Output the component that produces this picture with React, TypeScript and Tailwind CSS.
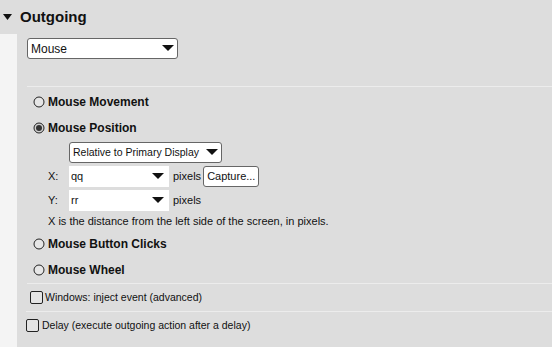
import React from 'react';

const Arrow = () => (
  <svg width="12" height="7" viewBox="0 0 12 7" className="shrink-0">
    <path d="M0 0 H12 L6 6 Z" fill="#111" />
  </svg>
);

const Radio = ({ checked }: { checked?: boolean }) => (
  <svg width="12" height="12" viewBox="0 0 12 12" className="shrink-0">
    <circle cx="6" cy="6" r="5" fill={checked ? '#cfcfcf' : '#e6e6e6'} stroke="#222" strokeWidth="1" />
    {checked && <circle cx="6" cy="6" r="3" fill="#333" />}
  </svg>
);

const Checkbox = () => (
  <div className="w-[13px] h-[13px] border border-[#222] rounded-[2px] bg-[#e4e4e4] shrink-0" />
);

const Select = ({ label, w, size }: { label: string; w: string; size: string }) => (
  <div className={`${w} ${size} h-[21px] bg-white border border-[#666] rounded-[3px] flex items-center justify-between pl-[3px] pr-[3px] whitespace-nowrap`}>
    <span>{label}</span>
    <Arrow />
  </div>
);

const RadioRow = ({ label, checked }: { label: string; checked?: boolean }) => (
  <div className="h-[26px] flex items-center gap-[3px] pl-[6px]">
    <Radio checked={checked} />
    <span className="font-bold text-[12px]">{label}</span>
  </div>
);

const Combo = ({ value }: { value: string }) => (
  <div className="w-[100px] h-[21px] bg-white flex items-center justify-between pl-[2px] pr-[5px] text-[11px]">
    <span>{value}</span>
    <Arrow />
  </div>
);

export default function App() {
  return (
    <div className="w-[552px] h-[347px] bg-[#dddddd] overflow-hidden text-[#111] font-['Liberation_Sans',Arial,sans-serif]">
      <div className="h-[34px] flex items-center pl-[3px] gap-[8px]">
        <svg width="9" height="6" viewBox="0 0 9 6"><path d="M0 0 H9 L4.5 6 Z" fill="#111" /></svg>
        <span className="font-bold text-[15px]">Outgoing</span>
      </div>
      <div className="flex h-[313px]">
        <div className="w-[17px] bg-[#f4f4f4] shrink-0" />
        <div className="flex-1 pl-[10px] flex flex-col">
          <div className="pt-[4px] h-[52px]">
            <Select label="Mouse" w="w-[151px]" size="text-[12px]" />
          </div>
          <div className="border-t border-[#ececec] flex flex-col pt-[2px]">
            <RadioRow label="Mouse Movement" />
            <RadioRow label="Mouse Position" checked />
            <div className="pl-[42px] pt-[1px]">
              <Select label="Relative to Primary Display" w="w-[153px]" size="text-[10.5px]" />
            </div>
            <div className="flex items-center h-[21px] mt-[3px] pl-[21px] text-[11px]">
              <span className="w-[21px]">X:</span>
              <Combo value="qq" />
              <span className="ml-[4px]">pixels</span>
              <div className="ml-[2px] h-[21px] px-[3px] bg-white border border-[#666] rounded-[3px] flex items-center">Capture...</div>
            </div>
            <div className="flex items-center h-[21px] mt-[3px] pl-[21px] text-[11px]">
              <span className="w-[21px]">Y:</span>
              <Combo value="rr" />
              <span className="ml-[4px]">pixels</span>
            </div>
            <div className="h-[20px] flex items-center pl-[21px] text-[11px]">
              X is the distance from the left side of the screen, in pixels.
            </div>
            <RadioRow label="Mouse Button Clicks" />
            <RadioRow label="Mouse Wheel" />
          </div>
          <div className="border-t border-[#ececec] h-[28px] flex items-center pl-[3px] gap-[2px] text-[10.5px]">
            <Checkbox />
            <span>Windows: inject event (advanced)</span>
          </div>
          <div className="border-t border-[#ececec] -ml-[1px] h-[28px] flex items-center gap-[3px] text-[10.5px]">
            <Checkbox />
            <span>Delay (execute outgoing action after a delay)</span>
          </div>
        </div>
      </div>
    </div>
  );
}
